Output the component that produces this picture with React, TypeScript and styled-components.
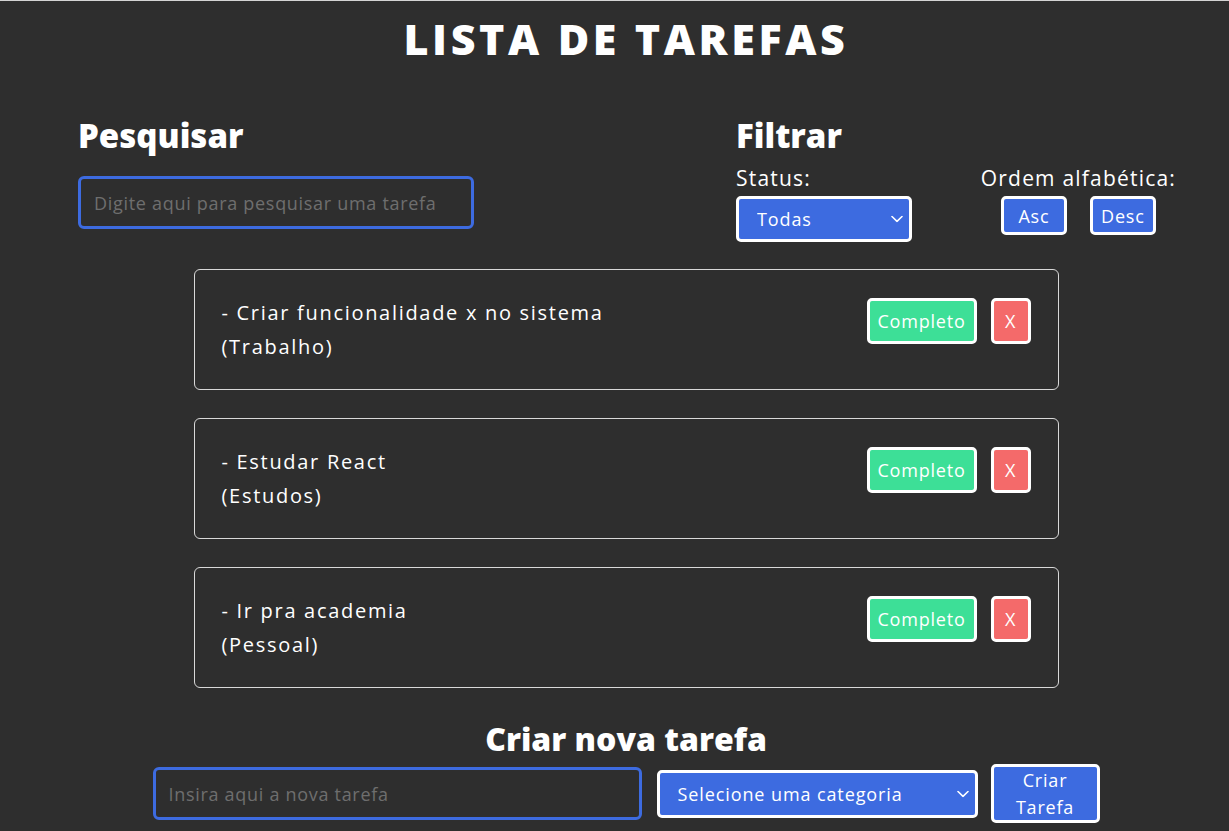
import React from "react";
import styled, { createGlobalStyle } from "styled-components";

const Global = createGlobalStyle`
  html, body {
    margin: 0;
    padding: 0;
    background: #2e2e2e;
  }
  body {
    border-top: 1px solid #d4d4d4;
    font-family: "Open Sans", "Noto Sans", sans-serif;
    color: #ffffff;
  }
  * { box-sizing: border-box; }
`;

const Page = styled.div`
  width: 1229px;
  min-height: 830px;
  padding-left: 23px;
  display: flex;
  flex-direction: column;
  align-items: center;
`;

const Title = styled.h1`
  margin: 10px 0 0;
  height: 56px;
  font-size: 43px;
  line-height: 56px;
  font-weight: 800;
  letter-spacing: 3.6px;
  text-align: center;
`;

const TopRow = styled.div`
  align-self: stretch;
  display: flex;
  justify-content: space-between;
  padding: 0 53px 0 55px;
  margin-top: 49px;
`;

const Section = styled.div<{ $w?: number }>`
  display: flex;
  flex-direction: column;
  width: ${(p) => (p.$w ? `${p.$w}px` : "auto")};
`;

const Heading = styled.h2`
  margin: 0;
  font-size: 33px;
  line-height: 40px;
  height: 40px;
  font-weight: 800;
`;

const SearchInput = styled.input`
  margin-top: 20px;
  width: 396px;
  height: 53px;
  border: 3px solid #3d6be0;
  border-radius: 6px;
  background: transparent;
  padding: 0 13px;
  font-family: inherit;
  font-size: 18px;
  letter-spacing: 0.7px;
  color: #fff;
  outline: none;
  &::placeholder { color: #6e6e6e; }
`;

const FilterRow = styled.div`
  display: flex;
  justify-content: space-between;
  margin-top: 9px;
`;

const FilterCol = styled.div<{ $center?: boolean }>`
  display: flex;
  flex-direction: column;
  align-items: ${(p) => (p.$center ? "center" : "flex-start")};
`;

const Label = styled.span`
  font-size: 21px;
  line-height: 26px;
  height: 26px;
  letter-spacing: 1.2px;
  margin-bottom: 5px;
  white-space: nowrap;
`;

const SelectWrap = styled.div<{ $w: number; $h: number }>`
  position: relative;
  width: ${(p) => p.$w}px;
  height: ${(p) => p.$h}px;
  flex-shrink: 0;
`;

const Select = styled.select`
  appearance: none;
  -webkit-appearance: none;
  width: 100%;
  height: 100%;
  background: #3d6be0;
  border: 3px solid #ffffff;
  border-radius: 5px;
  color: #fff;
  font-family: inherit;
  font-size: 18px;
  letter-spacing: 0.9px;
  padding: 0 0 0 18px;
  outline: none;
`;

const Chevron = styled.svg`
  position: absolute;
  right: 9px;
  top: 50%;
  transform: translateY(-50%);
  pointer-events: none;
`;

const SortButtons = styled.div`
  display: flex;
  gap: 23px;
`;

const BlueButton = styled.button`
  background: #3d6be0;
  border: 3px solid #ffffff;
  border-radius: 5px;
  color: #fff;
  font-family: inherit;
  font-size: 18px;
  letter-spacing: 0.8px;
  line-height: 22px;
  padding: 0;
  cursor: pointer;
`;

const SortButton = styled(BlueButton)`
  width: 66px;
  height: 39px;
`;

const List = styled.div`
  margin-top: 27px;
  display: flex;
  flex-direction: column;
  gap: 28px;
`;

const Card = styled.div`
  width: 865px;
  height: 121px;
  border: 1px solid #d8d8d8;
  border-radius: 6px;
  padding: 26px 27px 0 27px;
  display: flex;
  justify-content: space-between;
  align-items: flex-start;
`;

const TaskText = styled.div`
  font-size: 20px;
  line-height: 34px;
  letter-spacing: 1.7px;
`;

const Actions = styled.div`
  display: flex;
  gap: 14px;
  margin-top: 2px;
`;

const ActionButton = styled.button<{ $bg: string; $w: number }>`
  width: ${(p) => p.$w}px;
  height: 46px;
  background: ${(p) => p.$bg};
  border: 3px solid #ffffff;
  border-radius: 5px;
  color: #fff;
  font-family: inherit;
  font-size: 18px;
  letter-spacing: 0.8px;
  padding: 0;
  cursor: pointer;
`;

const CreateHeading = styled(Heading)`
  margin-top: 31px;
  font-size: 32px;
  text-align: center;
`;

const CreateRow = styled.div`
  display: flex;
  align-items: center;
  margin-top: 5px;
`;

const NewInput = styled(SearchInput)`
  margin: 0 15px 0 0;
  width: 489px;
  height: 53px;
`;

const CreateButton = styled(BlueButton)`
  margin-left: 13px;
  width: 109px;
  height: 59px;
  line-height: 27px;
`;

const ChevronIcon = () => (
  <Chevron width="12" height="7" viewBox="0 0 12 7">
    <path d="M1 1 L6 5.8 L11 1" stroke="#fff" strokeWidth="1.6" fill="none" strokeLinecap="round" strokeLinejoin="round" />
  </Chevron>
);

const tasks = [
  { text: "Criar funcionalidade x no sistema", cat: "Trabalho" },
  { text: "Estudar React", cat: "Estudos" },
  { text: "Ir pra academia", cat: "Pessoal" },
];

export default function App() {
  return (
    <>
      <Global />
      <Page>
        <Title>LISTA DE TAREFAS</Title>
        <TopRow>
          <Section>
            <Heading>Pesquisar</Heading>
            <SearchInput placeholder="Digite aqui para pesquisar uma tarefa" />
          </Section>
          <Section $w={440}>
            <Heading>Filtrar</Heading>
            <FilterRow>
              <FilterCol>
                <Label>Status:</Label>
                <SelectWrap $w={176} $h={46}>
                  <Select defaultValue="all">
                    <option value="all">Todas</option>
                    <option value="done">Completas</option>
                    <option value="todo">Incompletas</option>
                  </Select>
                  <ChevronIcon />
                </SelectWrap>
              </FilterCol>
              <FilterCol $center>
                <Label>Ordem alfabética:</Label>
                <SortButtons>
                  <SortButton>Asc</SortButton>
                  <SortButton>Desc</SortButton>
                </SortButtons>
              </FilterCol>
            </FilterRow>
          </Section>
        </TopRow>
        <List>
          {tasks.map((t) => (
            <Card key={t.text}>
              <TaskText>
                - {t.text}
                <br />({t.cat})
              </TaskText>
              <Actions>
                <ActionButton $bg="#3ddf97" $w={110}>Completo</ActionButton>
                <ActionButton $bg="#f46a6a" $w={40}>X</ActionButton>
              </Actions>
            </Card>
          ))}
        </List>
        <CreateHeading>Criar nova tarefa</CreateHeading>
        <CreateRow>
          <NewInput placeholder="Insira aqui a nova tarefa" />
          <SelectWrap $w={321} $h={48}>
            <Select defaultValue="">
              <option value="">Selecione uma categoria</option>
              <option value="Trabalho">Trabalho</option>
              <option value="Pessoal">Pessoal</option>
              <option value="Estudos">Estudos</option>
            </Select>
            <ChevronIcon />
          </SelectWrap>
          <CreateButton>
            Criar
            <br />
            Tarefa
          </CreateButton>
        </CreateRow>
      </Page>
    </>
  );
}
